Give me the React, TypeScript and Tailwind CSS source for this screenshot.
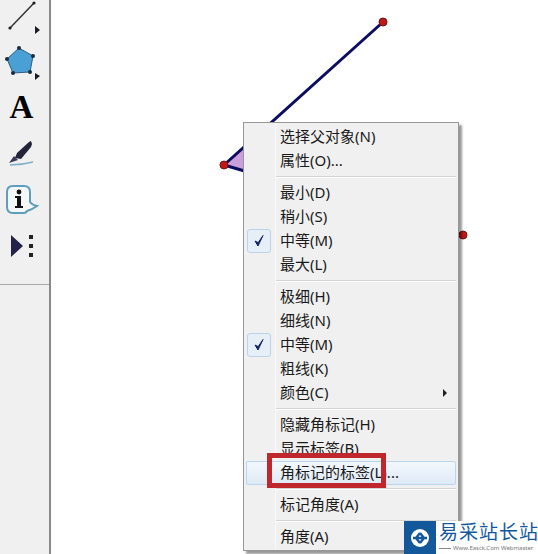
const fontStack = { fontFamily: '"Noto Sans", "Noto Sans CJK SC", sans-serif' };

type Item = { label: string; checked?: boolean; arrow?: boolean; active?: boolean } | 'sep';

const items: Item[] = [
  { label: '选择父对象(N)' },
  { label: '属性(O)...' },
  'sep',
  { label: '最小(D)' },
  { label: '稍小(S)' },
  { label: '中等(M)', checked: true },
  { label: '最大(L)' },
  'sep',
  { label: '极细(H)' },
  { label: '细线(N)' },
  { label: '中等(M)', checked: true },
  { label: '粗线(K)' },
  { label: '颜色(C)', arrow: true },
  'sep',
  { label: '隐藏角标记(H)' },
  { label: '显示标签(B)' },
  { label: '角标记的标签(L)...', active: true },
  'sep',
  { label: '标记角度(A)' },
  'sep',
  { label: '角度(A)' },
];

function ToolIcon({ children, h = 46 }: { children: React.ReactNode; h?: number }) {
  return (
    <svg width="50" height={h} viewBox={`0 0 50 ${h}`} className="block shrink-0">
      {children}
    </svg>
  );
}

function Toolbar() {
  return (
    <aside className="w-[51px] shrink-0 h-full bg-[#f0f0f0] border-r-2 border-[#8a8a8a] flex flex-col">
      <ToolIcon h={38}>
        <path d="M10 28 L34 3" stroke="#333" strokeWidth="1.5" />
        <circle cx="10" cy="28" r="1.6" fill="#222" />
        <circle cx="34" cy="3" r="1.6" fill="#222" />
        <path d="M35 26 L40 30 L35 34 Z" fill="#1a1a2a" />
      </ToolIcon>
      <ToolIcon>
        <path d="M19 10 L33 18 L30 34 L13 35 L7 21 Z" fill="#4a9fd4" stroke="#2c5f85" strokeWidth="1" />
        <g fill="#1d2a3a">
          <circle cx="19" cy="10" r="2" />
          <circle cx="33" cy="18" r="2" />
          <circle cx="30" cy="34" r="2" />
          <circle cx="13" cy="35" r="2" />
          <circle cx="7" cy="21" r="2" />
        </g>
        <path d="M35 35 L40 38 L35 42 Z" fill="#1a1a2a" />
      </ToolIcon>
      <div className="h-[46px] w-[50px] flex items-center justify-center shrink-0">
        <span className="text-[33px] leading-none font-bold text-black pr-[7px]" style={{ fontFamily: '"Liberation Serif", serif' }}>
          A
        </span>
      </div>
      <ToolIcon>
        <path d="M17 23 L29 12 L31 11 L32 14 L31 17 L21 29 L15 28 Z" fill="#23233a" />
        <path d="M14 26 L18 30 L9 33 Z" fill="#3a3a55" />
        <path d="M10 35 Q22 35 33 32" stroke="#7fb0c8" strokeWidth="1.5" fill="none" />
      </ToolIcon>
      <ToolIcon>
        <path
          d="M13 10 H24 Q30 10 30 16 V26 Q32 29 37 30 Q33 33 27 35 Q26 37 24 37 H13 Q7 37 7 31 V16 Q7 10 13 10 Z"
          fill="#f4f8fb"
          stroke="#5d9dbd"
          strokeWidth="2"
        />
        <circle cx="19" cy="16" r="2.4" fill="#111" />
        <path d="M15 20 H21 V30 H23 V32 H15 V30 H17 V22 H15 Z" fill="#111" />
      </ToolIcon>
      <ToolIcon>
        <path d="M11 13 L23 24 L11 35 Z" fill="#22224a" />
        <rect x="29" y="13" width="4" height="4" fill="#222" />
        <rect x="29" y="22" width="4" height="4" fill="#222" />
        <rect x="29" y="31" width="4" height="4" fill="#222" />
      </ToolIcon>
      <div className="h-[17px] shrink-0 border-b border-[#a8a8a8]" />
    </aside>
  );
}

function Sketch() {
  return (
    <svg viewBox="51 0 487 554" className="absolute inset-0 w-full h-full">
      <path d="M224 165 L250 142 L250 172 Z" fill="#c9a0dc" />
      <path d="M224 165 L383 22" stroke="#0c0c60" strokeWidth="3" />
      <path d="M224 165 L463 235" stroke="#0c0c60" strokeWidth="3" />
      <circle cx="383" cy="22" r="4" fill="#c01818" stroke="#7a1010" />
      <circle cx="224" cy="165" r="4" fill="#c01818" stroke="#7a1010" />
      <circle cx="463" cy="235" r="4" fill="#c01818" stroke="#7a1010" />
    </svg>
  );
}

function ContextMenu() {
  return (
    <div
      className="absolute left-[192px] top-[122px] w-[216px] h-[429px] bg-[#f0f0f0] border border-[#979797] pt-[2px] shadow-[3px_3px_2px_rgba(0,0,0,0.4)] text-[15px] text-[#1a1a1a]"
      style={fontStack}
    >
      <div className="absolute left-[31px] top-0 bottom-0 w-px bg-[#f8f8f8]" />
      {items.map((item, i) =>
        item === 'sep' ? (
          <div key={i} className="h-2 ml-[32px] mr-[2px] flex items-center">
            <div className="w-full h-px bg-[#d4d4d4] border-b border-white box-content" />
          </div>
        ) : (
          <div key={i} className="relative h-6 flex items-center pl-[36px]">
            {item.active && (
              <div className="absolute left-[2px] right-[2px] inset-y-0 rounded-[2px] border border-[#b8d6ee] bg-gradient-to-b from-[#f2f7fc] to-[#dfeaf6]" />
            )}
            {item.checked && (
              <div className="absolute left-[3px] top-0 w-6 h-6 rounded-[3px] border border-[#bcd2ea] bg-[#e6eef8] flex items-center justify-center">
                <svg width="14" height="14" viewBox="0 0 14 14">
                  <path d="M3 7 L6 12 L11 1.5 L6.2 8.6 Z" fill="#14246a" stroke="#14246a" strokeWidth="1" />
                </svg>
              </div>
            )}
            <span className="relative leading-none whitespace-nowrap -translate-y-px">{item.label}</span>
            {item.arrow && <div className="absolute right-[11px] top-[8px] border-y-[4px] border-y-transparent border-l-[4px] border-l-[#222]" />}
          </div>
        ),
      )}
      <div className="absolute left-[23px] top-[330px] w-[119px] h-[35px] border-[5px] border-[#c0272d]" />
    </div>
  );
}

function Watermark() {
  return (
    <div className="absolute right-0 bottom-0 w-[134px] h-[33px] bg-white flex" style={fontStack}>
      <div className="w-8 h-full bg-[#14589c] flex items-center justify-center shrink-0">
        <svg width="22" height="22" viewBox="0 0 22 22">
          <circle cx="11" cy="11" r="9" fill="#fff" />
          <path d="M4 11 H18 M11 6 L7 11 L11 16 M11 6 L15 11 L11 16" stroke="#14589c" strokeWidth="2.4" fill="none" />
        </svg>
      </div>
      <div className="flex-1 pl-[3px] min-w-0">
        <div className="text-[19px] leading-[23px] tracking-[1px] whitespace-nowrap text-[#14589c]">易采站长站</div>
        <div className="flex items-center gap-[2px] text-[6px] leading-[8px] whitespace-nowrap text-[#777]">
          <div className="w-3 h-px bg-[#888] shrink-0" />
          <span>Www.Easck.Com Webmaster</span>
        </div>
      </div>
    </div>
  );
}

export default function App() {
  return (
    <div className="relative w-[538px] h-[554px] overflow-hidden bg-white flex">
      <Toolbar />
      <main className="relative flex-1">
        <Sketch />
        <ContextMenu />
        <Watermark />
      </main>
    </div>
  );
}
